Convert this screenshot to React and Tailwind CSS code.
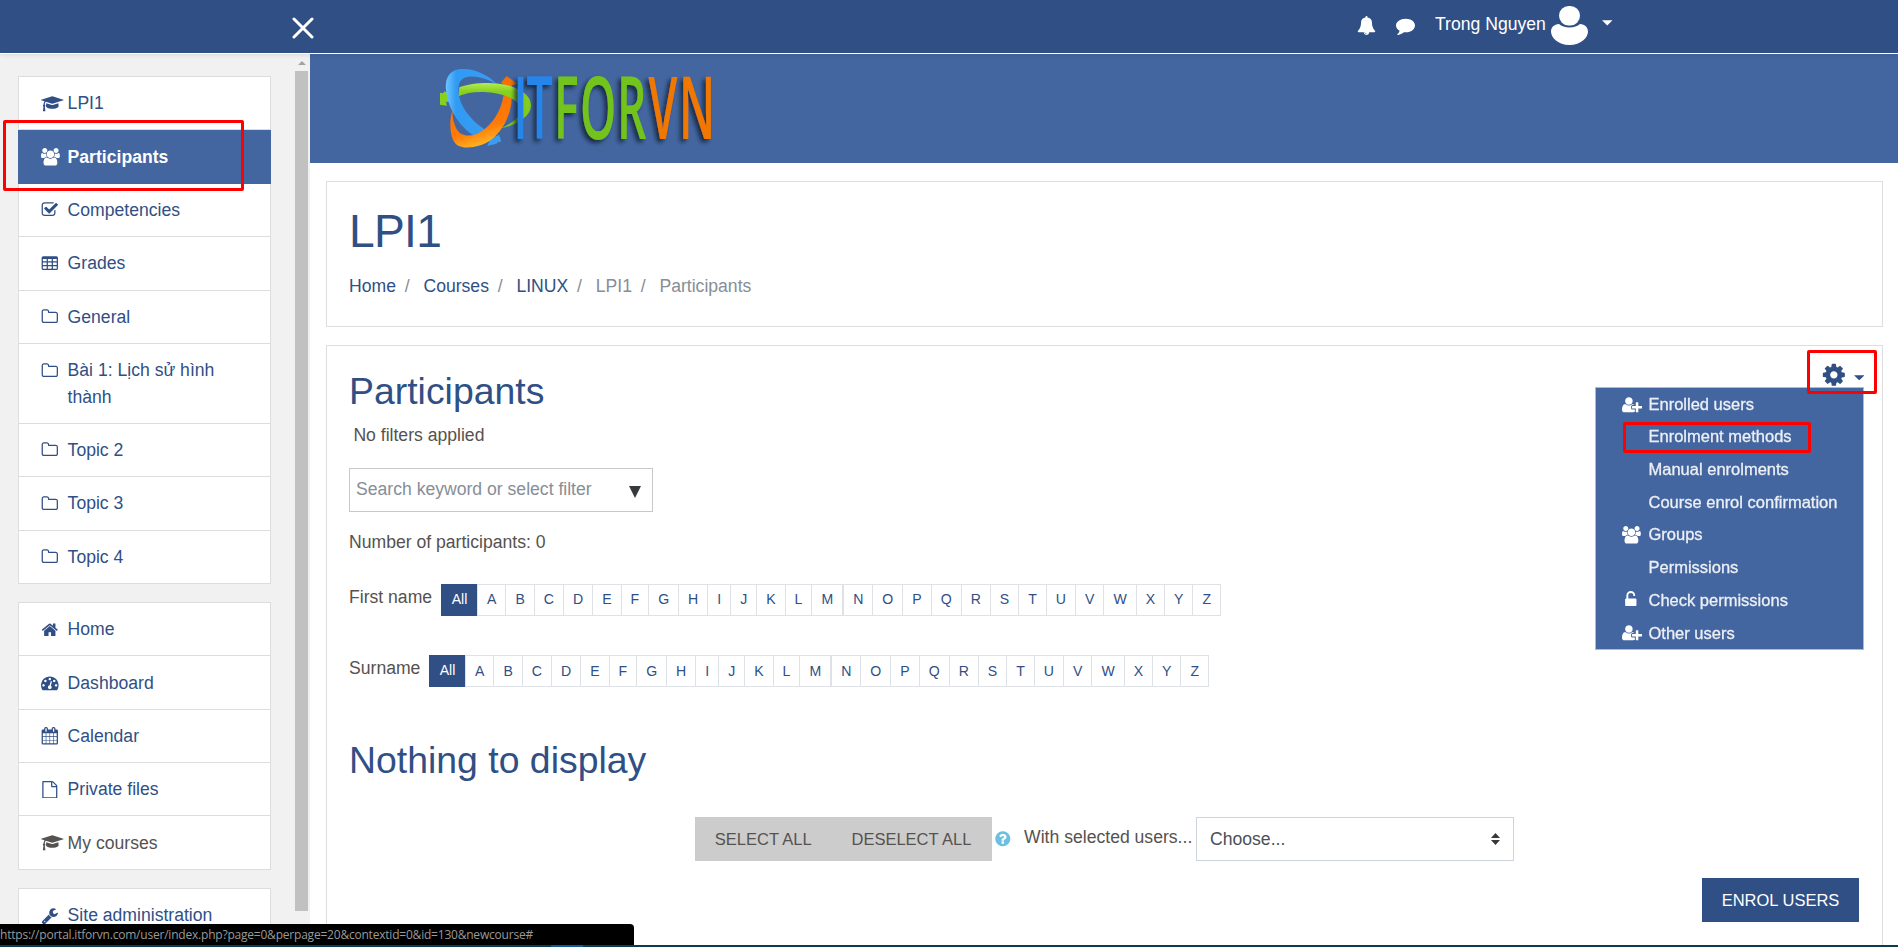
import React from "react";

const PATHS = {
  users: {
    w: 1920,
    d: "M593 896q-162 5-265 128h-134q-82 0-138-40.5t-56-118.5q0-353 124-353 6 0 43.5 21t97.5 42.5 119 21.5q67 0 133-23-5 37-5 66 0 139 81 256zm1071 637q0 120-73 189.5t-194 69.5h-874q-121 0-194-69.5t-73-189.5q0-53 3.5-103.5t14-109 26.5-108.5 43-97.5 62-81 85.5-53.5 111.5-20q10 0 43 21.5t73 48 107 48 135 21.5 135-21.5 107-48 73-48 43-21.5q61 0 111.5 20t85.5 53.5 62 81 43 97.5 26.5 108.5 14 109 3.5 103.5zm-1024-1277q0 106-75 181t-181 75-181-75-75-181 75-181 181-75 181 75 75 181zm704 384q0 159-112.5 271.5t-271.5 112.5-271.5-112.5-112.5-271.5 112.5-271.5 271.5-112.5 271.5 112.5 112.5 271.5zm576 225q0 78-56 118.5t-138 40.5h-134q-103-123-265-128 81-117 81-256 0-29-5-66 66 23 133 23 59 0 119-21.5t97.5-42.5 43.5-21q124 0 124 353zm-128-609q0 106-75 181t-181 75-181-75-75-181 75-181 181-75 181 75 75 181z",
  },
  cap: {
    w: 2304,
    d: "M1774 836l18 316q4 69-82 128t-235 93.5-323 34.5-323-34.5-235-93.5-82-128l18-316 574 181q22 7 48 7t48-7zm530-324q0 23-22 31l-1120 352q-4 1-10 1t-10-1l-652-206q-43 34-71 111.5t-34 178.5q63 36 63 109 0 69-58 107l58 433q2 14-8 25-9 11-24 11h-192q-15 0-24-11-10-11-8-25l58-433q-58-38-58-107 0-73 65-111 11-207 98-330l-333-104q-22-8-22-31t22-31l1120-352q4-1 10-1t10 1l1120 352q22 8 22 31z",
  },
  check: {
    w: 1792,
    d: "M1472 930v318q0 119-84.5 203.5t-203.5 84.5h-832q-119 0-203.5-84.5t-84.5-203.5v-832q0-119 84.5-203.5t203.5-84.5h832q63 0 117 25 15 7 18 23 3 17-9 29l-49 49q-10 10-23 10-3 0-9-2-23-6-45-6h-832q-66 0-113 47t-47 113v832q0 66 47 113t113 47h832q66 0 113-47t47-113v-254q0-13 9-22l64-64q10-10 23-10 6 0 12 3 20 8 20 29zm231-489l-814 814q-24 24-57 24t-57-24l-430-430q-24-24-24-57t24-57l110-110q24-24 57-24t57 24l263 263 647-647q24-24 57-24t57 24l110 110q24 24 24 57t-24 57z",
  },
  table: {
    w: 1792,
    d: "M224 128h1344q160 0 160 160v1088q0 160-160 160h-1344q-160 0-160-160v-1088q0-160 160-160zM192 400v240h384v-240zM704 400v240h384v-240zM1216 400v240h384v-240zM192 768v256h384v-256zM704 768v256h384v-256zM1216 768v256h384v-256zM192 1152v256h384v-256zM704 1152v256h384v-256zM1216 1152v256h384v-256z",
  },
  folder: {
    w: 1792,
    d: "M1600 1312v-704q0-40-28-68t-68-28h-704q-40 0-68-28t-28-68v-64q0-40-28-68t-68-28h-320q-40 0-68 28t-28 68v960q0 40 28 68t68 28h1216q40 0 68-28t28-68zm128-704v704q0 92-66 158t-158 66h-1216q-92 0-158-66t-66-158v-960q0-92 66-158t158-66h320q92 0 158 66t66 158v32h672q92 0 158 66t66 158z",
  },
  home: {
    w: 1792,
    d: "M1472 992v480q0 26-19 45t-45 19h-384v-384h-256v384h-384q-26 0-45-19t-19-45v-480q0-1 .5-3t.5-3l575-474 575 474q1 2 1 6zm223-69l-62 74q-8 9-21 11h-3q-13 0-21-7l-692-577-692 577q-12 8-24 7-13-2-21-11l-62-74q-8-10-7-23.5t11-21.5l719-599q32-26 76-26t76 26l244 204v-195q0-14 9-23t23-9h192q14 0 23 9t9 23v408l219 182q10 8 11 21.5t-7 23.5z",
  },
  gauge: {
    w: 1792,
    d: "M384 1152q0-53-37.5-90.5t-90.5-37.5-90.5 37.5-37.5 90.5 37.5 90.5 90.5 37.5 90.5-37.5 37.5-90.5zm192-448q0-53-37.5-90.5t-90.5-37.5-90.5 37.5-37.5 90.5 37.5 90.5 90.5 37.5 90.5-37.5 37.5-90.5zm428 481l101-382q6-26-7.5-48.5t-38.5-29.5-48 6.5-30 39.5l-101 382q-60 5-107 43.5t-63 98.5q-20 77 20 146t117 89 146-20 89-117q16-60-6-117t-72-91zm660-33q0-53-37.5-90.5t-90.5-37.5-90.5 37.5-37.5 90.5 37.5 90.5 90.5 37.5 90.5-37.5 37.5-90.5zm-640-640q0-53-37.5-90.5t-90.5-37.5-90.5 37.5-37.5 90.5 37.5 90.5 90.5 37.5 90.5-37.5 37.5-90.5zm448 192q0-53-37.5-90.5t-90.5-37.5-90.5 37.5-37.5 90.5 37.5 90.5 90.5 37.5 90.5-37.5 37.5-90.5zm320 448q0 261-141 483-19 29-54 29h-1402q-35 0-54-29-141-221-141-483 0-182 71-348t191-286 286-191 348-71 348 71 286 191 191 286 71 348z",
  },
  calendar: {
    w: 1792,
    d: "M192 256h128v-96q0-160 160-160h64q160 0 160 160v96h384v-96q0-160 160-160h64q160 0 160 160v96h128q128 0 128 128v1280q0 128-128 128h-1408q-128 0-128-128v-1280q0-128 128-128zM480 128q-32 0-32 32v288q0 32 32 32h64q32 0 32-32v-288q0-32-32-32zM1248 128q-32 0-32 32v288q0 32 32 32h64q32 0 32-32v-288q0-32-32-32zM192 640v288h288v-288zM544 640v288h320v-288zM928 640v288h320v-288zM1312 640v288h288v-288zM192 992v320h288v-320zM544 992v320h320v-320zM928 992v320h320v-320zM1312 992v320h288v-320zM192 1376v288h288v-288zM544 1376v288h320v-288zM928 1376v288h320v-288zM1312 1376v288h288v-288z",
  },
  file: {
    w: 1792,
    d: "M1596 380q28 28 48 76t20 88v1152q0 40-28 68t-68 28h-1344q-40 0-68-28t-28-68v-1600q0-40 28-68t68-28h896q40 0 88 20t76 48zm-444-244v376h376q-10-29-22-41l-313-313q-12-12-41-22zm384 1528v-1024h-416q-40 0-68-28t-28-68v-416h-768v1536h1280z",
  },
  wrench: {
    w: 1792,
    d: "M448 1472q0-26-19-45t-45-19-45 19-19 45 19 45 45 19 45-19 19-45zm644-420l-682 682q-37 37-90 37-52 0-91-37l-106-108q-38-36-38-90 0-53 38-91l681-681q39 98 114.5 173.5t173.5 114.5zm634-435q0 39-23 106-47 134-164.500 217.500t-258.500 83.500q-185 0-316.500-131.500t-131.500-316.500 131.500-316.500 316.500-131.500q58 0 121.500 16.500t107.500 46.500q16 11 16 28t-16 28l-293 169v224l193 107q5-3 79-48.500t135.500-81 70.500-35.500q15 0 23.500 10t8.500 25z",
  },
  cog: {
    w: 1792,
    d: "M1152 896q0-106-75-181t-181-75-181 75-75 181 75 181 181 75 181-75 75-181zm512-109v222q0 12-8 23t-20 13l-185 28q-19 54-39 91 35 50 107 138 10 12 10 25t-9 23q-27 37-99 108t-94 71q-12 0-26-9l-138-108q-44 23-91 38-16 136-29 186-7 28-36 28h-222q-14 0-24.5-8.5t-11.5-21.5l-28-184q-49-16-90-37l-141 107q-10 9-25 9-14 0-25-11-126-114-165-168-7-10-7-23 0-12 8-23 15-21 51-66.5t54-70.5q-27-50-41-99l-183-27q-13-2-21-12.5t-8-23.5v-222q0-12 8-23t19-13l186-28q14-46 39-92-40-57-107-138-10-12-10-24 0-10 9-23 26-36 98.5-107.5t94.5-71.5q13 0 26 10l138 107q44-23 91-38 16-136 29-186 7-28 36-28h222q14 0 24.5 8.5t11.5 21.5l28 184q49 16 90 37l142-107q9-9 24-9 13 0 25 10 129 119 165 170 7 8 7 22 0 12-8 23-15 21-51 66.5t-54 70.5q26 50 41 98l183 28q13 2 21 12.5t8 23.5z",
  },
  userPlus: {
    w: 2048,
    d: "M704 896q-159 0-271.5-112.5t-112.5-271.5 112.5-271.5 271.5-112.5 271.5 112.5 112.5 271.5-112.5 271.5-271.5 112.5zm960 128h352q13 0 22.5 9.5t9.5 22.5v192q0 13-9.5 22.5t-22.5 9.5h-352v352q0 13-9.5 22.5t-22.5 9.5h-192q-13 0-22.5-9.5t-9.5-22.5v-352h-352q-13 0-22.5-9.5t-9.5-22.5v-192q0-13 9.5-22.5t22.5-9.5h352v-352q0-13 9.5-22.5t22.5-9.5h192q13 0 22.5 9.5t9.5 22.5v352zm-736 224q0 52 38 90t90 38h256v238q-68 50-171 50h-874q-121 0-194-69t-73-190q0-53 3.5-103.5t14-109 26.5-108.5 43-97.5 62-81 85.5-53.5 111.5-20q19 0 39 17 79 61 154.5 91.5t164.5 30.5 164.5-30.5 154.5-91.5q20-17 39-17 132 0 217 96h-223q-52 0-90 38t-38 90v192z",
  },
  unlock: {
    w: 1792,
    d: "M1376 768q40 0 68 28t28 68v576q0 40-28 68t-68 28h-960q-40 0-68-28t-28-68v-576q0-40 28-68t68-28h32v-320q0-185 131.5-316.5t316.5-131.5 316.5 131.5 131.5 316.5q0 26-19 45t-45 19h-64q-26 0-45-19t-19-45q0-106-75-181t-181-75-181 75-75 181v320h736z",
  },
  help: {
    w: 1792,
    d: "M1024 1376v-192q0-14-9-23t-23-9h-192q-14 0-23 9t-9 23v192q0 14 9 23t23 9h192q14 0 23-9t9-23zm256-672q0-88-55.5-163t-138.5-116-170-41q-243 0-371 213-15 24 8 42l132 100q7 6 19 6 16 0 25-12 53-68 86-92 34-24 86-24 48 0 85.5 26t37.5 59q0 38-20 61t-68 45q-63 28-115.5 86.5t-52.5 125.5v36q0 14 9 23t23 9h192q14 0 23-9t9-23q0-19 21.5-49.5t54.5-49.5q32-18 49-28.5t46-35 44.5-48 28-60.5 12.5-81zm384 192q0 209-103 385.5t-279.5 279.5-385.5 103-385.5-103-279.5-279.5-103-385.5 103-385.5 279.5-279.5 385.5-103 385.5 103 279.5 279.5 103 385.5z",
  },
  comment: {
    w: 1792,
    d: "M1792 896q0 174-120 321.5t-326 233-450 85.5q-70 0-145-8-198 175-460 242-49 14-114 22-17 2-30.5-9t-17.5-29v-1q-3-4-.5-12t2-10 4.5-9.5l6-9 7-8.5 8-9q7-8 31-34.5t34.5-38 31-39.5 32.5-51 27-59 26-76q-157-89-247.5-220t-90.5-281q0-130 71-248.5t191-204.5 286-136.5 348-50.5q244 0 450 85.5t326 233 120 321.5z",
  },
  bell: {
    w: 1792,
    d: "M912 1696q0-16-16-16-59 0-101.5-42.5t-42.5-101.5q0-16-16-16t-16 16q0 73 51.5 124.5t124.5 51.5q16 0 16-16zm816-288q0 52-38 90t-90 38h-448q0 106-75 181t-181 75-181-75-75-181h-448q-52 0-90-38t-38-90q50-42 91-88t85-119.5 74.5-158.5 50-206 19.5-260q0-152 117-282.5t307-158.5q-8-19-8-39 0-40 28-68t68-28 68 28 28 68q0 20-8 39 190 28 307 158.5t117 282.5q0 139 19.5 260t50 206 74.5 158.5 85 119.5 91 88z",
  },
};

function Icon({ name, className = "h-[17.6px]" }) {
  const { w, d } = PATHS[name];
  return (
    <svg viewBox={`0 0 ${w} 1792`} className={`block w-auto shrink-0 fill-current ${className}`} aria-hidden="true">
      <path fillRule="evenodd" d={d} />
    </svg>
  );
}

function Caret({ className }) {
  return (
    <svg viewBox="0 0 10 5" className={`block shrink-0 fill-current ${className}`} aria-hidden="true">
      <path d="M0 0h10L5 5z" />
    </svg>
  );
}

function NavItem({ icon, label, active, muted, tall }) {
  const tone = active ? "bg-[#4466a0] text-white font-bold" : muted ? "text-[#55524f]" : "text-[#304f85]";
  return (
    <a
      className={`flex ${tall ? "h-[79.8px]" : "h-[53.4px]"} ${
        active ? "-mx-px px-[23px] border-[#4466a0]" : "px-[22px] border-[#dddddd]"
      } border-b pt-[13.3px] ${tone}`}
    >
      <span className="flex h-[26.4px] w-[26.6px] shrink-0 items-center">
        <Icon name={icon} className="h-[17.6px] max-w-none" />
      </span>
      <span className="w-[170px]">{label}</span>
    </a>
  );
}

const courseNav = [
  { icon: "cap", label: "LPI1" },
  { icon: "users", label: "Participants", active: true },
  { icon: "check", label: "Competencies" },
  { icon: "table", label: "Grades" },
  { icon: "folder", label: "General" },
  { icon: "folder", label: "Bài 1: Lịch sử hình thành", tall: true },
  { icon: "folder", label: "Topic 2" },
  { icon: "folder", label: "Topic 3" },
  { icon: "folder", label: "Topic 4" },
];
const siteNav = [
  { icon: "home", label: "Home" },
  { icon: "gauge", label: "Dashboard" },
  { icon: "calendar", label: "Calendar" },
  { icon: "file", label: "Private files" },
  { icon: "cap", label: "My courses", muted: true },
];

function NavGroup({ items }) {
  return (
    <nav className="w-[253px] border border-b-0 border-[#dddddd] bg-white">
      {items.map((it) => (
        <NavItem key={it.label} {...it} />
      ))}
    </nav>
  );
}

function Initials({ label, gap, leading }) {
  const cell = `-ml-px h-8 border border-[#dee2e6] px-[9px] ${leading}`;
  return (
    <div className="flex h-8 items-start">
      <span className={`leading-[27.4px] ${gap}`}>{label}</span>
      <div className="flex text-[14.08px] text-[#304f85]">
        <span className="h-8 w-[37px] bg-[#304f85] text-center leading-[31.5px] text-white">All</span>
        {"ABCDEFGHIJKLM".split("").map((c) => (
          <span key={c} className={cell}>{c}</span>
        ))}
      </div>
      <div className="flex pl-px text-[14.08px] text-[#304f85]">
        {"NOPQRSTUVWXYZ".split("").map((c) => (
          <span key={c} className={cell}>{c}</span>
        ))}
      </div>
    </div>
  );
}

function Logo() {
  const glyphs = [
    ["I", 513.6, "#2585e8"],
    ["T", 526.5, "#2585e8"],
    ["F", 554, "#72c31c"],
    ["O", 580, "#72c31c"],
    ["R", 617, "#72c31c"],
    ["V", 648.5, "#f07800"],
    ["N", 679, "#f07800"],
  ];
  return (
    <svg viewBox="430 54 300 109" className="h-[109px] w-[300px] overflow-visible" role="img" aria-label="ITFORVN">
      <defs>
        <filter id="drop" x="-20%" y="-20%" width="140%" height="150%">
          <feDropShadow dx="-3" dy="3" stdDeviation="2.2" floodColor="#0e1a30" floodOpacity="0.85" />
        </filter>
        <linearGradient id="blue" x1="0" y1="0" x2="1" y2="0">
          <stop offset="0" stopColor="#6cc6ff" />
          <stop offset="0.2" stopColor="#2f9bf4" />
          <stop offset="1" stopColor="#3c9cf0" />
        </linearGradient>
        <linearGradient id="green" x1="0" y1="0" x2="0" y2="1">
          <stop offset="0" stopColor="#b4ea50" />
          <stop offset="0.2" stopColor="#86d01e" />
          <stop offset="1" stopColor="#7cc81c" />
        </linearGradient>
        <linearGradient id="orange" x1="0" y1="0" x2="0.3" y2="1">
          <stop offset="0" stopColor="#f06a00" />
          <stop offset="0.8" stopColor="#ff7a08" />
          <stop offset="1" stopColor="#ffb020" />
        </linearGradient>
      </defs>
      {/* Three interlocking arrow rings */}
      <g transform="translate(430 60) scale(0.3333)">
        <path fill="#86d01e" d="M30 98l9 2 4-6 8 4 6 28-9-1 3 12-21-3z" />
        <path fill="url(#blue)" d="M202 74C172 40 122 22 86 28C54 33 43 62 49 98C57 152 90 203 142 234L176 216C132 190 97 152 88 112C82 84 84 62 104 53C130 44 168 54 202 74z" />
        <path fill="#3c9cf0" d="M182 232l32 13-8 0 2 0-36 13 6-13-8-4z" />
        <path fill="#3c9cf0" d="M186 232l22-7 6 20-9-2-5 8-28 6 8-14-8-4z" />
        <path fill="url(#orange)" d="M68 148C54 190 62 240 80 254C102 270 152 262 182 240C218 213 240 170 245 122L246 76L262 72L230 48L213 68L221 74L222 92C220 132 200 178 165 206C132 234 92 234 78 204C70 186 66 168 68 148z" />
        <path fill="url(#green)" d="M88 82C130 66 200 65 240 78C285 92 305 115 303 140C300 172 252 198 213 205C245 190 276 168 273 148C266 115 215 98 160 96C130 95 105 100 86 108z" />
      </g>
      <g filter="url(#drop)" fontFamily='"Open Sans", sans-serif' fontWeight="600" fontSize="86.5">
        {glyphs.map(([c, x, fill]) => (
          <text key={c} transform={`translate(${x} 138.5) scale(0.535 1)`} fill={fill}>{c}</text>
        ))}
      </g>
    </svg>
  );
}

const crumbs = [
  ["Home", true],
  ["Courses", true],
  ["LINUX", true],
  ["LPI1", false],
  ["Participants", false],
];

const menu = [
  ["userPlus", "Enrolled users"],
  [null, "Enrolment methods"],
  [null, "Manual enrolments"],
  [null, "Course enrol confirmation"],
  ["users", "Groups"],
  [null, "Permissions"],
  ["unlock", "Check permissions"],
  ["userPlus", "Other users"],
];

export default function App() {
  return (
    <div className="relative flex h-[947px] w-[1898px] flex-col overflow-hidden bg-white font-['Liberation_Sans',Arial,sans-serif] text-[17.6px] leading-[26.4px] text-[#55524f]">
      <header className="relative z-10 flex h-[54px] shrink-0 border-b border-white bg-[#304f85] text-white shadow-[0_2px_4px_rgba(0,0,0,0.08)]">
        <svg viewBox="0 0 22 22" className="ml-[292px] mt-[16.5px] h-[22px] w-[22px] shrink-0" fill="none" stroke="currentColor" strokeWidth="3" strokeLinecap="round">
          <path d="M2 2l18 18M20 2L2 20" />
        </svg>
        <div className="ml-[1043px] mt-4">
          <Icon name="bell" className="h-[19px]" />
        </div>
        <div className="ml-[19.5px] mt-4">
          <Icon name="comment" className="h-[19px]" />
        </div>
        <span className="ml-[20.5px] mt-[10.5px] w-[111.5px] whitespace-nowrap">Trong Nguyen</span>
        <svg viewBox="0 0 37 39" className="ml-[4.5px] mt-1.5 h-[39px] w-[37px] shrink-0 fill-current">
          <rect x="8" y="0" width="21" height="19.5" rx="9.8" />
          <path d="M8 18c2.500 2.200 6 3.400 10.500 3.400s8-1.200 10.500-3.400c5 .3 8 3.500 8 7.500 0 6-7 13.500-18.500 13.500S0 31.500 0 25.500C0 21.500 3 18.300 8 18z" />
        </svg>
        <Caret className="ml-[14px] mt-5 h-[5.5px] w-[10.5px]" />
      </header>

      <div className="flex min-h-0 flex-1">
        <aside className="flex w-[310px] shrink-0 overflow-hidden bg-[#f1f1f1]">
          <div className="flex w-[295px] flex-col gap-[18px] pl-[18px] pt-[22px]">
            <NavGroup items={courseNav} />
            <NavGroup items={siteNav} />
            <NavGroup items={[{ icon: "wrench", label: "Site administration" }]} />
          </div>
          <div className="flex w-[13px] flex-col items-center">
            <svg viewBox="0 0 8 4" className="mb-[6px] mt-[7px] h-1 w-2 shrink-0 fill-[#a3a3a3]"><path d="M0 4h8L4 0z" /></svg>
            <div className="h-[840px] w-full shrink-0 bg-[#c1c1c1]" />
          </div>
        </aside>

        <main className="flex min-w-0 flex-1 flex-col">
          <div className="h-[109px] shrink-0 bg-[#4466a0] pl-[120px]">
            <Logo />
          </div>

          <section className="ml-4 mr-[15px] mt-[18px] h-[146px] shrink-0 border border-[#dddddd] px-[22px] pt-[21px]">
            <h1 className="text-[46.2px] leading-[56px] tracking-[-0.7px] text-[#304f85]">LPI1</h1>
            <ol className="mt-[13.5px] flex text-[#868e96]">
              {crumbs.map(([t, link], i) => (
                <li key={t} className="flex">
                  {i > 0 && <span className="pl-[8.8px] pr-[13.8px]">/</span>}
                  <span className={link ? "text-[#304f85]" : ""}>{t}</span>
                </li>
              ))}
            </ol>
          </section>

          <section className="ml-4 mr-[15px] mt-[18px] flex min-h-0 flex-1 flex-col overflow-hidden border border-b-0 border-[#dddddd] px-[22px] pt-[23px]">
            <div className="flex h-[44px] shrink-0 justify-between text-[#304f85]">
              <h2 className="text-[37.4px] leading-[45.5px]">Participants</h2>
              <div className="-mt-[7px] mr-[-4px] flex">
                <Icon name="cog" className="h-[25.7px]" />
                <Caret className="ml-[7px] mt-[12.5px] h-[5.5px] w-[10.5px]" />
              </div>
            </div>
            <p className="mt-[8.5px] pl-[4.4px]">No filters applied</p>
            <div className="mt-5 flex h-11 w-[304px] shrink-0 items-center justify-between border border-[#c8c8c8] pl-1.5 pr-[11px] text-[#868e96]">
              <span className="-mt-[1.5px]">Search keyword or select filter</span>
              <svg viewBox="0 0 12 12" className="mt-[4px] h-3 w-3 fill-[#373a3c]"><path d="M0 0h12L6 12z" /></svg>
            </div>
            <p className="mt-[17.2px]">Number of participants: 0</p>
            <div className="mt-[28.3px] flex flex-col gap-[39px]">
              <Initials label="First name" gap="w-[92px]" leading="leading-[28.6px]" />
              <Initials label="Surname" gap="w-[80px]" leading="leading-[30px]" />
            </div>
            <h2 className="mt-[51px] text-[37.4px] leading-[45.5px] text-[#304f85]">Nothing to display</h2>
            <div className="mt-[33.5px] flex h-11 shrink-0 justify-center text-[16.5px]">
              <div className="flex w-[297px] bg-[#cccccc] leading-[44px]">
                <span className="w-[138px] pl-[19.8px]">SELECT ALL</span>
                <span className="pl-[18.5px]">DESELECT ALL</span>
              </div>
              <div className="ml-[1.5px] mt-[13px] text-[#6bc0e2]">
                <Icon name="help" className="h-[17.6px]" />
              </div>
              <span className="ml-[13px] mt-[7px] w-[171.9px] whitespace-nowrap text-[17.6px]">With selected users...</span>
              <div className="flex w-[318px] items-center justify-between border border-[#ced4da] bg-white pl-[13px] pr-[13px] text-[17.6px] text-[#495057]">
                <span>Choose...</span>
                <svg viewBox="0 0 9 12" className="h-3 w-[9px] fill-[#373a3c]"><path d="M0 5L4.500 0 9 5zM0 7h9L4.500 12z" /></svg>
              </div>
            </div>
            <button className="mr-px mt-[17px] h-11 w-[157px] shrink-0 self-end bg-[#304f85] text-[16.5px] leading-[44px] text-white">ENROL USERS</button>
          </section>
        </main>
      </div>

      <div className="relative z-10 flex h-0.5 shrink-0 bg-[#0b3a52] pl-[551px]">
        <div className="h-full w-8 bg-[#0f5a9c]" />
      </div>

      {/* Course settings dropdown */}
      <div className="absolute left-[1595px] top-[387px] h-[263px] w-[269px] border border-[#a9bbd8] bg-[#4466a0] text-[16.5px] text-white">
        {menu.map(([icon, label]) => (
          <div key={label} className="flex h-[32.7px] items-center pl-[26px]">
            <span className="flex w-[26.5px] shrink-0">
              {icon && (
                <span className={icon === "unlock" ? "-mt-[2px] flex" : "flex"}>
                  <Icon name={icon} />
                </span>
              )}
            </span>
            <span className="-mt-[0.8px] opacity-90 [-webkit-text-stroke:0.3px_white]">{label}</span>
          </div>
        ))}
      </div>

      {/* Highlight frames */}
      <div className="absolute left-[3px] top-[120px] z-20 h-[71px] w-[241px] rounded-[2px] border-3 border-[#ff0000]" />
      <div className="absolute left-[1807px] top-[350px] z-20 h-[44px] w-[70px] rounded-[2px] border-3 border-[#ff0000]" />
      <div className="absolute left-[1623px] top-[422px] z-20 h-[31px] w-[188px] rounded-[2px] border-3 border-[#ff0000]" />

      {/* Link status bubble */}
      <div className="absolute left-0 top-[924px] z-20 h-[21px] w-[634px] whitespace-nowrap rounded-tr-[4px] bg-black font-['Open_Sans','Noto_Sans',sans-serif] text-[12px] leading-[21px] tracking-[-0.21px] text-[#9a9a9a]">
        https://portal.itforvn.com/user/index.php?page=0&amp;perpage=20&amp;contextid=0&amp;id=130&amp;newcourse#
      </div>
    </div>
  );
}
